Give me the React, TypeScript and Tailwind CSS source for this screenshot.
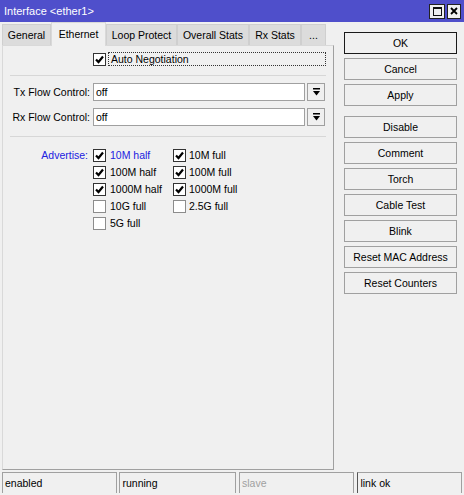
import React from 'react'

/* ---------- pieces ---------- */
function Check({ on, dark }: { on: boolean; dark?: boolean }) {
  return (
    <span
      className={`flex h-[13px] w-[13px] shrink-0 items-center justify-center border bg-white ${
        on || dark ? 'border-[#333333]' : 'border-[#8c8c8c]'
      }`}
    >
      {on && (
        <svg width="9" height="9" viewBox="0 0 9 9">
          <path d="M1 4.5 L3.5 7 L8 1.5" fill="none" stroke="#000" strokeWidth="2.2" />
        </svg>
      )}
    </span>
  )
}

function DropBtn() {
  return (
    <div className="ml-[2px] flex h-[18px] w-[18px] items-center justify-center border border-[#a0a0a0] bg-[#f0f0f0]">
      <svg width="9" height="9" viewBox="0 0 9 9">
        <rect x="1" y="0" width="7" height="1.5" fill="#000" />
        <path d="M1 3 H8 L4.5 7.5 Z" fill="#000" />
      </svg>
    </div>
  )
}

function Field({ label, value }: { label: string; value: string }) {
  return (
    <div className="flex h-[18px] items-center">
      <div className="w-[90px] pr-[3px] text-right">{label}</div>
      <div className="flex h-[18px] w-[212px] items-center border border-[#a0a0a0] bg-white pl-[2px]">
        {value}
      </div>
      <DropBtn />
    </div>
  )
}

function Sep() {
  return <div className="mx-[7px] border-t border-[#d7d7d7]" />
}

function Btn({ label, main }: { label: string; main?: boolean }) {
  return (
    <div
      className={`flex h-[22px] items-center justify-center border bg-[#f0f0f0] ${
        main ? 'border-[#1a1a1a]' : 'border-[#a0a0a0]'
      }`}
    >
      {label}
    </div>
  )
}

const tabs = ['General', 'Ethernet', 'Loop Protect', 'Overall Stats', 'Rx Stats', '...']
const tabW = [49, 55, 71, 72, 52, 25]

const advertise: [string, boolean, string | null, boolean][] = [
  ['10M half', true, '10M full', true],
  ['100M half', true, '100M full', true],
  ['1000M half', true, '1000M full', true],
  ['10G full', false, '2.5G full', false],
  ['5G full', false, null, false],
]

/* ---------- window ---------- */
export default function App() {
  return (
    <div className="flex h-[495px] w-[464px] flex-col overflow-hidden bg-[#f0f0f0] font-['Liberation_Sans',Arial,sans-serif] text-[10.5px] leading-none text-black">
      {/* title bar */}
      <div className="flex h-[22px] shrink-0 items-center bg-[#4f4fcb] pl-[4px] pr-[3px]">
        <span className="text-[11px] text-white">Interface &lt;ether1&gt;</span>
        <div className="ml-auto flex gap-[2px]">
          <div className="flex h-[15px] w-[16px] items-center justify-center border border-[#222] bg-[#f0f0f0]">
            <div className="h-[9px] w-[9px] border border-t-2 border-[#111]" />
          </div>
          <div className="flex h-[15px] w-[14px] items-center justify-center border border-[#222] bg-[#f0f0f0]">
            <svg width="8" height="8" viewBox="0 0 8 8">
              <path d="M1 1 L7 7 M7 1 L1 7" stroke="#000" strokeWidth="1.8" />
            </svg>
          </div>
        </div>
      </div>

      {/* body */}
      <div className="flex h-[450px] shrink-0">
        {/* left: tabs + panel */}
        <div className="flex w-[334px] flex-col pl-[2px]">
          <div className="flex h-[23px] items-end">
            {tabs.map((t, i) =>
              i === 1 ? (
                <div
                  key={t}
                  className="relative z-10 -mb-px flex h-[24px] items-center justify-center border border-b-0 border-[#d9d9d9] bg-[#f0f0f0]"
                  style={{ width: tabW[i] }}
                >
                  {t}
                </div>
              ) : (
                <div
                  key={t}
                  className="flex h-[21px] items-center justify-center border border-b-0 border-[#cfcfcf] bg-[#dcdcdc]"
                  style={{ width: tabW[i] }}
                >
                  {t}
                </div>
              ),
            )}
          </div>

          <div className="flex h-[425px] flex-col border border-t-[#d9d9d9] border-l-[#d9d9d9] border-r-[#a0a0a0] border-b-[#a0a0a0]">
            {/* auto negotiation */}
            <div className="mt-[6px] flex h-[14px] items-center">
              <div className="w-[90px]" />
              <Check on dark />
              <div className="ml-[2px] flex h-[14px] w-[218px] items-center border border-dotted border-[#333] pl-[2px]">
                Auto Negotiation
              </div>
            </div>

            <div className="mt-[9px]">
              <Sep />
            </div>

            <div className="mt-[7px] flex flex-col gap-[7px]">
              <Field label="Tx Flow Control:" value="off" />
              <Field label="Rx Flow Control:" value="off" />
            </div>

            <div className="mt-[10px]">
              <Sep />
            </div>

            {/* advertise */}
            <div className="mt-[12px] flex">
              <div className="w-[90px] pr-[5px] pt-px text-right text-[#2020e0]">Advertise:</div>
              <div className="flex flex-col">
                {advertise.map(([a, aon, b, bon], i) => (
                  <div key={a} className="flex h-[17px] items-start">
                    <div className="flex w-[80px] items-center">
                      <Check on={aon} />
                      <span className={`ml-[4px] ${i === 0 ? 'text-[#2020e0]' : ''}`}>{a}</span>
                    </div>
                    {b && (
                      <div className="flex items-center">
                        <Check on={bon} />
                        <span className="ml-[3px]">{b}</span>
                      </div>
                    )}
                  </div>
                ))}
              </div>
            </div>
          </div>
        </div>

        {/* right: buttons */}
        <div className="ml-[10px] flex w-[113px] flex-col pt-[10px]">
          <div className="flex flex-col gap-[4px]">
            <Btn label="OK" main />
            <Btn label="Cancel" />
            <Btn label="Apply" />
          </div>
          <div className="mt-[10px] flex flex-col gap-[4px]">
            <Btn label="Disable" />
            <Btn label="Comment" />
            <Btn label="Torch" />
            <Btn label="Cable Test" />
            <Btn label="Blink" />
            <Btn label="Reset MAC Address" />
            <Btn label="Reset Counters" />
          </div>
        </div>
      </div>

      {/* status bar */}
      <div className="flex h-[21px] gap-[2px] px-[2px]">
        <div className="flex w-[116px] items-center border border-[#a0a0a0] border-b-0 pl-[2px]">enabled</div>
        <div className="flex w-[117px] items-center border border-[#a0a0a0] border-b-0 pl-[2px]">running</div>
        <div className="ml-px flex w-[116px] items-center border border-[#a0a0a0] border-b-0 pl-[2px] text-[#a0a0a0]">slave</div>
        <div className="ml-px flex w-[105px] items-center border border-[#a0a0a0] border-l-[#555] border-b-0 pl-[2px]">link ok</div>
      </div>
    </div>
  )
}
